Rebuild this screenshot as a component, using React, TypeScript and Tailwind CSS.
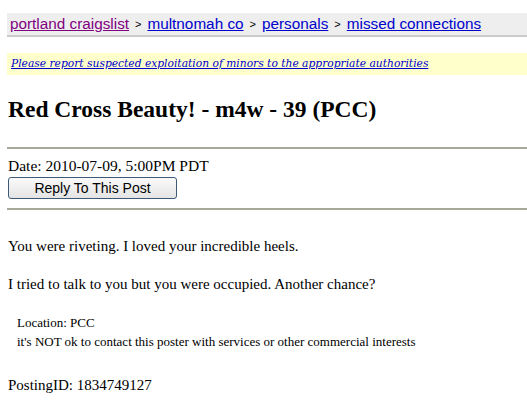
import React from "react";

export default function App() {
  return (
    <div className="min-h-[408px] bg-white pl-[7px] pt-[13px] font-['Liberation_Serif',serif] text-black">
      <div className="flex items-center h-[24px] bg-[#eeeeee] border-b-2 border-[#cccccc] pl-[3px] font-['Liberation_Sans',Arial,sans-serif] text-[15.3px] leading-none">
        <a className="text-[#800080] underline" href="#">portland craigslist</a>
        <span className="text-[11px] mx-[6px] text-black">&gt;</span>
        <a className="text-[#0000cc] underline" href="#">multnomah co</a>
        <span className="text-[11px] mx-[6px] text-black">&gt;</span>
        <a className="text-[#0000cc] underline" href="#">personals</a>
        <span className="text-[11px] mx-[6px] text-black">&gt;</span>
        <a className="text-[#0000cc] underline" href="#">missed connections</a>
      </div>
      <div className="mt-[16px] flex items-center h-[22px] bg-[#ffffcc] pl-[4px] font-['DejaVu_Serif',serif] italic text-[10.7px]">
        <a className="text-[#0000cc] underline" href="#">Please report suspected exploitation of minors to the appropriate authorities</a>
      </div>
      <h2 className="mt-[20px] pl-px text-[23.5px] font-bold leading-[28px]">Red Cross Beauty! - m4w - 39 (PCC)</h2>
      <hr className="mt-[24px] border-t-2 border-[#a8a898]" />
      <div className="mt-[8px] pl-px text-[15.5px] leading-[18px]">Date: 2010-07-09, 5:00PM PDT</div>
      <button className="ml-px mt-[2px] w-[169px] h-[22px] rounded-[3px] border border-[#3c5a78] bg-gradient-to-b from-[#fafafa] to-[#e4e4e4] font-['Liberation_Sans',Arial,sans-serif] text-[14px] text-black leading-none">Reply To This Post</button>
      <hr className="mt-[8px] border-t-2 border-[#a8a898]" />
      <div className="pl-px text-[15px] leading-[18px]">
        <p className="mt-[27px]">You were riveting. I loved your incredible heels.</p>
        <p className="mt-[20px]">I tried to talk to you but you were occupied. Another chance?</p>
      </div>
      <ul className="mt-[20px] pl-[10px] text-[13px] leading-[19px]">
        <li>Location: PCC</li>
        <li>it's NOT ok to contact this poster with services or other commercial interests</li>
      </ul>
      <div className="mt-[25px] pl-px text-[15px] leading-[18px]">PostingID: 1834749127</div>
    </div>
  );
}
